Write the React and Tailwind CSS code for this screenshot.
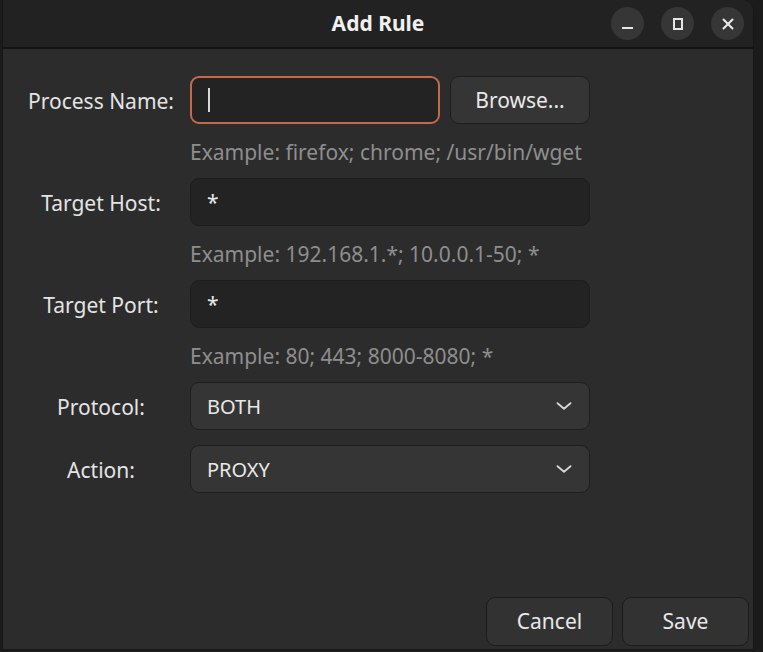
import React from 'react';

const font = { fontFamily: '"Noto Sans", "Open Sans", sans-serif' };

function Chevron() {
  return (
    <svg width="16" height="8" viewBox="0 0 16 8" fill="none">
      <path d="M1.5 1.2 L8 6.8 L14.5 1.2" stroke="#d6d6d6" strokeWidth="1.8" strokeLinecap="round" strokeLinejoin="round" />
    </svg>
  );
}

function WinButton({ children }) {
  return (
    <div className="w-[33px] h-[33px] rounded-full bg-[#363636] flex items-center justify-center">
      {children}
    </div>
  );
}

function Label({ children }) {
  return <div className="h-[48px] flex items-center justify-center pt-[2px] text-[21px] leading-none text-[#e4e4e4]">{children}</div>;
}

function Hint({ children }) {
  return <div className="h-[54px] flex items-center pt-[2px] text-[21px] leading-none text-[#8e8e8e]">{children}</div>;
}

function TextField({ value, focused, className = '' }) {
  return (
    <div
      className={
        'h-[48px] rounded-[9px] bg-[#232323] flex items-center pl-[16px] text-[21px] leading-none text-[#e8e8e8] ' +
        (focused ? 'border-2 border-[#c46a4c] pl-[12px] ' : 'border border-[#1c1c1c] ') +
        className
      }
    >
      {focused ? <span className="w-[2px] h-[24px] bg-[#d8d8d8]" /> : value}
    </div>
  );
}

function Select({ value }) {
  return (
    <div className="h-[48px] rounded-[9px] bg-[#353535] border border-[#1e1e1e] flex items-center justify-between pl-[16px] pr-[17px] text-[20px] leading-none text-[#e8e8e8]">
      <span className="pt-[2px]">{value}</span>
      <Chevron />
    </div>
  );
}

export default function App() {
  return (
    <div className="w-[763px] h-[652px] bg-[#1b1b1b] overflow-hidden" style={font}>
      <div className="ml-[2px] w-[752px] h-[650px] rounded-tr-[12px] overflow-hidden flex flex-col bg-[#2c2c2c] border-l border-r border-b border-[#161616]">
        <div className="h-[49px] shrink-0 bg-[#222222] border-b-2 border-[#141414] grid grid-cols-[1fr_auto_1fr] items-center">
          <div />
          <div className="text-[21px] leading-none font-bold text-[#f0f0f0]">Add Rule</div>
          <div className="flex justify-end items-center gap-[17px] pr-[9px]">
            <WinButton>
              <span className="block w-[11px] h-[2px] bg-[#e6e6e6] mt-[8px]" />
            </WinButton>
            <WinButton>
              <span className="block w-[10px] h-[12px] border-2 border-[#e6e6e6]" />
            </WinButton>
            <WinButton>
              <svg width="12" height="12" viewBox="0 0 12 12">
                <path d="M1.5 1.5 L10.5 10.5 M10.5 1.5 L1.5 10.5" stroke="#ececec" strokeWidth="2" strokeLinecap="round" />
              </svg>
            </WinButton>
          </div>
        </div>

        <div className="flex-1 flex flex-col pt-[27px] pl-[17px]">
          <div className="grid grid-cols-[162px_400px] gap-x-[8px]">
            <Label>Process Name:</Label>
            <div className="flex gap-[10px]">
              <TextField focused className="flex-1" />
              <button className="w-[140px] h-[48px] rounded-[9px] bg-[#353535] border border-[#1e1e1e] text-[21px] leading-none text-[#e8e8e8]">
                Browse...
              </button>
            </div>
            <div />
            <Hint>Example: firefox; chrome; /usr/bin/wget</Hint>

            <Label>Target Host:</Label>
            <TextField value="*" />
            <div />
            <Hint>Example: 192.168.1.*; 10.0.0.1-50; *</Hint>

            <Label>Target Port:</Label>
            <TextField value="*" />
            <div />
            <Hint>Example: 80; 443; 8000-8080; *</Hint>

            <Label>Protocol:</Label>
            <Select value="BOTH" />
            <div className="h-[15px]" />
            <div className="h-[15px]" />
            <Label>Action:</Label>
            <Select value="PROXY" />
          </div>

          <div className="mt-auto flex justify-end gap-[9px] pr-[4px] pb-[3px]">
            <button className="w-[127px] h-[49px] rounded-[9px] bg-[#323232] border border-[#1c1c1c] text-[21px] leading-none text-[#e8e8e8]">
              Cancel
            </button>
            <button className="w-[127px] h-[49px] rounded-[9px] bg-[#323232] border border-[#1c1c1c] text-[21px] leading-none text-[#e8e8e8]">
              Save
            </button>
          </div>
        </div>
      </div>
    </div>
  );
}
